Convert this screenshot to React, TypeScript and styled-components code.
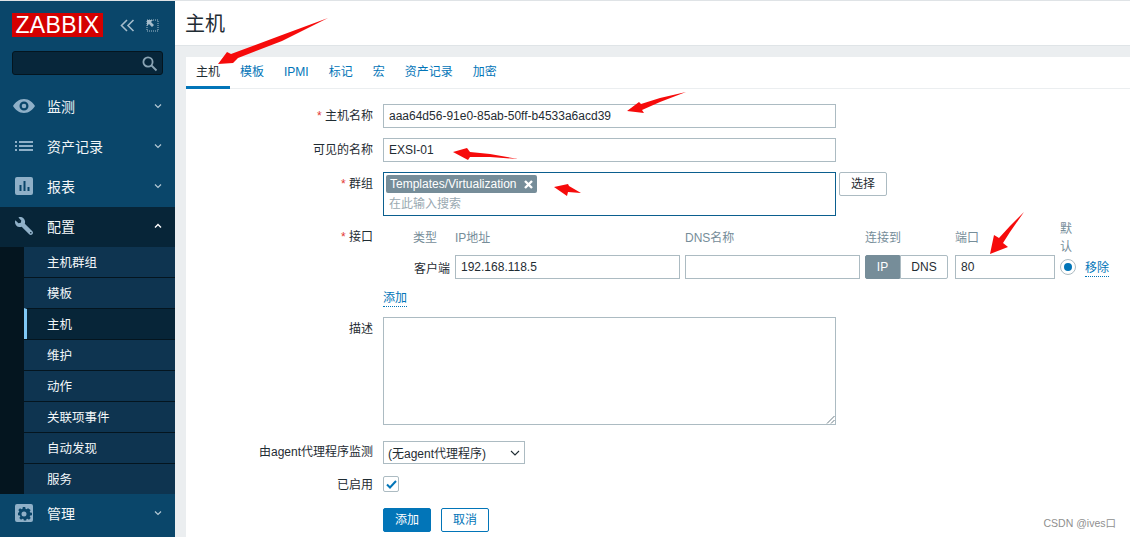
import React from "react";
import styled, { createGlobalStyle } from "styled-components";
import { FaWrench } from "react-icons/fa";

const FONT = `"Liberation Sans", "Noto Sans CJK SC", sans-serif`;

const Global = createGlobalStyle`
  html, body { margin: 0; padding: 0; height: 100%; overflow: hidden; background: #ebeef0; }
  * { box-sizing: border-box; }
  body { font-family: ${FONT}; font-size: 12px; color: #1f2c33; }
`;

const Page = styled.div`
  position: relative;
  display: flex;
  width: 1130px;
  height: 537px;
  overflow: hidden;
  border-top: 1px solid #dfe3e6;
`;

const Sidebar = styled.aside`
  flex: 0 0 175px;
  display: flex;
  flex-direction: column;
  background: #0a466a;
  color: #f2f6f8;
`;

const Brand = styled.div`
  display: flex;
  align-items: center;
  height: 24px;
  margin: 12px 0 0 12px;
`;

const Logo = styled.div`
  width: 91px;
  height: 24px;
  background: #d40000;
  color: #fff;
  font-size: 23px;
  line-height: 24px;
  text-align: center;
  letter-spacing: 0.4px;
`;

const BrandIcons = styled.div`
  display: flex;
  align-items: center;
  gap: 11px;
  margin-left: 17px;
  color: #a5bccb;
`;

const Search = styled.div`
  display: flex;
  align-items: center;
  justify-content: flex-end;
  width: 151px;
  height: 24px;
  margin: 14px 0 0 12px;
  padding-right: 4px;
  background: #07263a;
  border: 1px solid #04151f;
  border-radius: 3px;
  color: #8aa4b4;
`;

const Menu = styled.nav`
  display: flex;
  flex-direction: column;
  margin-top: 12px;
`;

const MenuItem = styled.div<{ $open?: boolean }>`
  display: flex;
  align-items: center;
  height: 40px;
  padding: 0 0 2px 15px;
  font-size: 14px;
  background: ${(p) => (p.$open ? "#072538" : "transparent")};
`;

const IconSlot = styled.span`
  flex: 0 0 32px;
  display: flex;
  align-items: center;
  color: #8fb0c8;
`;

const EyeIcon = styled.svg`
  margin-left: -2px;
`;

const MenuLabel = styled.span`
  flex: 1;
`;

const Chevron = styled.span`
  display: flex;
  margin-right: 13px;
  color: #b4c8d4;
`;

const SubMenu = styled.div`
  display: flex;
  flex-direction: column;
  height: 247px;
  padding-left: 24px;
  background: #04151f;
`;

const SubItem = styled.div<{ $active?: boolean }>`
  flex: 1;
  display: flex;
  align-items: center;
  padding: 0 0 2px ${(p) => (p.$active ? "20px" : "23px")};
  font-size: 12.5px;
  background: ${(p) => (p.$active ? "#072538" : "#0e3450")};
  border-left: ${(p) => (p.$active ? "3px solid #7fc8f5" : "none")};
  border-top: 1px solid #04151f;
  &:first-child { border-top: none; }
`;

const Main = styled.main`
  flex: 1;
  display: flex;
  flex-direction: column;
  min-width: 0;
`;

const Header = styled.header`
  height: 45px;
  padding-left: 10px;
  background: #fff;
  border-bottom: 1px solid #dfe4e7;
`;

const Title = styled.h1`
  margin: 0;
  font-size: 20px;
  font-weight: 400;
  line-height: 46px;
  color: #1f2c33;
`;

const Panel = styled.section`
  flex: 1;
  margin: 11px 0 0 11px;
  background: #fff;
`;

const Tabs = styled.div`
  display: flex;
  height: 32px;
  border-bottom: 1px solid #ebeef0;
`;

const Tab = styled.div<{ $active?: boolean }>`
  padding: 0 10px;
  height: 32px;
  line-height: 31px;
  font-size: 12px;
  color: ${(p) => (p.$active ? "#1f2c33" : "#0275b8")};
  border-bottom: ${(p) => (p.$active ? "3px solid #0275b8" : "none")};
`;

const Form = styled.div`
  display: grid;
  grid-template-columns: 187px 1fr;
  column-gap: 10px;
  align-items: start;
  padding-top: 15px;
`;

const Label = styled.div<{ $required?: boolean; $mt?: number }>`
  margin-top: ${(p) => p.$mt ?? 0}px;
  min-height: 24px;
  line-height: 24px;
  text-align: right;
  color: #1f2c33;
  white-space: nowrap;
  &::before {
    content: ${(p) => (p.$required ? '"* "' : '""')};
    color: #e33734;
  }
`;

const Field = styled.div<{ $mt?: number }>`
  margin-top: ${(p) => p.$mt ?? 0}px;
`;

const TextInput = styled.div<{ $w?: number }>`
  width: ${(p) => p.$w ?? 453}px;
  height: 24px;
  padding: 0 5px;
  line-height: 22px;
  font-size: 12px;
  background: #fff;
  border: 1px solid #acbbc2;
  color: #1f2c33;
  white-space: nowrap;
`;

const GroupRow = styled.div`
  display: flex;
  align-items: flex-start;
  gap: 3px;
`;

const GroupBox = styled.div`
  width: 453px;
  height: 44px;
  padding: 2px;
  border: 1px solid #0b5f8f;
`;

const Tag = styled.div`
  display: inline-flex;
  align-items: center;
  height: 18px;
  padding: 0 4px;
  gap: 7px;
  background: #768d99;
  color: #fff;
  border-radius: 2px;
  line-height: 18px;
`;

const Placeholder = styled.div`
  margin: 3px 0 0 3px;
  line-height: 17px;
  color: #9aa9b1;
`;

const GhostButton = styled.div`
  width: 48px;
  height: 24px;
  line-height: 22px;
  text-align: center;
  color: #1f2c33;
  background: #fff;
  border: 1px solid #acbbc2;
  border-radius: 2px;
`;

const IfaceGrid = styled.div`
  display: grid;
  grid-template-columns: 37px 225px 175px 85px 100px 20px auto;
  column-gap: 5px;
  margin-left: 30px;
  align-items: center;
`;

const Th = styled.div`
  margin: 1px 0 -1px;
  color: #768d99;
  line-height: 18px;
  white-space: nowrap;
`;

const ThWrap = styled(Th)`
  white-space: normal;
`;

const RowHead = styled.div`
  padding-left: 1px;
  white-space: nowrap;
`;

const Segments = styled.div`
  display: flex;
  width: 83px;
  height: 24px;
`;

const Segment = styled.div<{ $on?: boolean }>`
  flex: ${(p) => (p.$on ? "0 0 35px" : "1")};
  line-height: 22px;
  text-align: center;
  color: ${(p) => (p.$on ? "#fff" : "#1f2c33")};
  background: ${(p) => (p.$on ? "#768d99" : "#fff")};
  border: 1px solid ${(p) => (p.$on ? "#768d99" : "#acbbc2")};
  border-radius: ${(p) => (p.$on ? "2px 0 0 2px" : "0 2px 2px 0")};
`;

const Radio = styled.div`
  width: 16px;
  height: 16px;
  border: 1px solid #acbbc2;
  border-radius: 50%;
  background: #fff;
  display: flex;
  align-items: center;
  justify-content: center;
  &::after {
    content: "";
    width: 8px;
    height: 8px;
    border-radius: 50%;
    background: #0275b8;
  }
`;

const DottedLink = styled.span`
  display: inline-block;
  color: #0275b8;
  line-height: 15px;
  border-bottom: 1px dotted #0275b8;
`;

const RemoveCell = styled.span`
  padding-top: 4px;
`;

const Textarea = styled.div`
  width: 453px;
  height: 108px;
  border: 1px solid #acbbc2;
  position: relative;
  background: #fff;
`;

const Grip = styled.svg`
  position: absolute;
  right: 0;
  bottom: 0;
`;

const Select = styled.div`
  display: flex;
  align-items: center;
  justify-content: space-between;
  width: 142px;
  height: 23px;
  padding: 0 4px;
  border: 1px solid #acbbc2;
  background: #fff;
`;

const Checkbox = styled.div`
  width: 16px;
  height: 16px;
  border: 1px solid #acbbc2;
  border-radius: 2px;
  display: flex;
  align-items: center;
  justify-content: center;
`;

const Actions = styled.div`
  display: flex;
  gap: 10px;
`;

const ActionButton = styled.div<{ $primary?: boolean }>`
  width: 48px;
  height: 24px;
  line-height: 22px;
  text-align: center;
  border: 1px solid #0275b8;
  border-radius: 2px;
  color: ${(p) => (p.$primary ? "#fff" : "#0275b8")};
  background: ${(p) => (p.$primary ? "#0275b8" : "#fff")};
`;

const Arrows = styled.svg`
  position: absolute;
  left: 0;
  top: -1px;
  pointer-events: none;
`;

const Watermark = styled.div`
  position: absolute;
  right: 14px;
  bottom: 7px;
  font-size: 10.5px;
  color: #8f8f8f;
`;

const Down = () => (
  <svg width="8" height="6" viewBox="0 0 8 6" fill="none" stroke="currentColor" strokeWidth="1.2">
    <path d="M1 1.500 4 4.500 7 1.500" />
  </svg>
);
const Up = () => (
  <svg width="8" height="6" viewBox="0 0 8 6" fill="none" stroke="#fff" strokeWidth="1.4">
    <path d="M1 4.500 4 1.500 7 4.500" />
  </svg>
);

const App = () => (
  <>
    <Global />
    <Page>
      <Sidebar>
        <Brand>
          <Logo>ZABBIX</Logo>
          <BrandIcons>
            <svg width="15" height="13" viewBox="0 0 15 13" fill="none" stroke="currentColor" strokeWidth="1.6">
              <path d="M7 1 1.500 6.500 7 12M13.500 1 8 6.500 13.500 12" />
            </svg>
            <svg width="13" height="13" viewBox="0 0 13 13" fill="none">
              <path d="M1 1h11v11H1z" stroke="currentColor" strokeDasharray="1 1" />
              <path d="M1 1h6L5 3l3 3-2 2-3-3-2 2z" fill="currentColor" />
            </svg>
          </BrandIcons>
        </Brand>
        <Search>
          <svg width="17" height="17" viewBox="0 0 17 17" fill="none" stroke="currentColor" strokeWidth="1.8">
            <circle cx="7" cy="7" r="4.600" />
            <path d="M10.500 10.500 15.500 15.500" />
          </svg>
        </Search>
        <Menu>
          <MenuItem>
            <IconSlot>
              <EyeIcon width="22" height="14" viewBox="0 0 22 14">
                <path fillRule="evenodd" fill="currentColor" d="M11 0c5 0 9 3.500 11 7-2 3.500-6 7-11 7S2 10.500 0 7c2-3.500 6-7 11-7zm0 2.500a4.500 4.500 0 1 0 0 9 4.500 4.500 0 0 0 0-9zm0 2.200a2.300 2.300 0 1 1 0 4.600 2.300 2.300 0 0 1 0-4.600z" />
              </EyeIcon>
            </IconSlot>
            <MenuLabel>监测</MenuLabel>
            <Chevron><Down /></Chevron>
          </MenuItem>
          <MenuItem>
            <IconSlot>
              <svg width="18" height="12" viewBox="0 0 18 12" fill="currentColor">
                <path d="M0 1h2v2H0zM4 1h14v2H4zM0 5h2v2H0zM4 5h14v2H4zM0 9h2v2H0zM4 9h14v2H4z" />
              </svg>
            </IconSlot>
            <MenuLabel>资产记录</MenuLabel>
            <Chevron><Down /></Chevron>
          </MenuItem>
          <MenuItem>
            <IconSlot>
              <svg width="18" height="18" viewBox="0 0 18 18">
                <path fillRule="evenodd" fill="currentColor" d="M2 0h14a2 2 0 0 1 2 2v14a2 2 0 0 1-2 2H2a2 2 0 0 1-2-2V2a2 2 0 0 1 2-2zm2.500 8v6h2V8zm4-4v10h2V4zm4 6v4h2v-4z" />
              </svg>
            </IconSlot>
            <MenuLabel>报表</MenuLabel>
            <Chevron><Down /></Chevron>
          </MenuItem>
          <MenuItem $open>
            <IconSlot><FaWrench size={18} style={{ transform: "scaleX(-1)" }} /></IconSlot>
            <MenuLabel>配置</MenuLabel>
            <Chevron><Up /></Chevron>
          </MenuItem>
          <SubMenu>
            <SubItem>主机群组</SubItem>
            <SubItem>模板</SubItem>
            <SubItem $active>主机</SubItem>
            <SubItem>维护</SubItem>
            <SubItem>动作</SubItem>
            <SubItem>关联项事件</SubItem>
            <SubItem>自动发现</SubItem>
            <SubItem>服务</SubItem>
          </SubMenu>
          <MenuItem>
            <IconSlot>
              <svg width="18" height="18" viewBox="0 0 18 18">
                <path fillRule="evenodd" fill="currentColor" d="M2 0h14a2 2 0 0 1 2 2v14a2 2 0 0 1-2 2H2a2 2 0 0 1-2-2V2a2 2 0 0 1 2-2zm5.800 3-.3 1.700-1 .5-1.500-1-1.700 1.700 1 1.500-.5 1L3 8.800v2.400l1.800.3.5 1-1 1.500 1.700 1.700 1.500-1 1 .4.300 1.400h2.400l.3-1.400 1-.4 1.500 1 1.700-1.700-1-1.500.5-1 1.800-.3V8.800l-1.800-.3-.5-1 1-1.500L13 4.300l-1.500 1-1-.5L10.200 3zM9 7.500a2.500 2.500 0 1 1 0 5 2.500 2.500 0 0 1 0-5z" />
              </svg>
            </IconSlot>
            <MenuLabel>管理</MenuLabel>
            <Chevron><Down /></Chevron>
          </MenuItem>
        </Menu>
      </Sidebar>
      <Main>
        <Header>
          <Title>主机</Title>
        </Header>
        <Panel>
          <Tabs>
            <Tab $active>主机</Tab>
            <Tab>模板</Tab>
            <Tab>IPMI</Tab>
            <Tab>标记</Tab>
            <Tab>宏</Tab>
            <Tab>资产记录</Tab>
            <Tab>加密</Tab>
          </Tabs>
          <Form>
            <Label $required>主机名称</Label>
            <Field><TextInput>aaa64d56-91e0-85ab-50ff-b4533a6acd39</TextInput></Field>

            <Label $mt={10}>可见的名称</Label>
            <Field $mt={10}><TextInput>EXSI-01</TextInput></Field>

            <Label $required $mt={10}>群组</Label>
            <Field $mt={10}>
              <GroupRow>
                <GroupBox>
                  <Tag>
                    Templates/Virtualization
                    <svg width="9" height="9" viewBox="0 0 9 9" stroke="#fff" strokeWidth="2.400">
                      <path d="M1 1 8 8M8 1 1 8" />
                    </svg>
                  </Tag>
                  <Placeholder>在此输入搜索</Placeholder>
                </GroupBox>
                <GhostButton>选择</GhostButton>
              </GroupRow>
            </Field>

            <Label $required $mt={9}>接口</Label>
            <Field $mt={3}>
              <IfaceGrid>
                <Th>类型</Th>
                <Th>IP地址</Th>
                <Th>DNS名称</Th>
                <Th>连接到</Th>
                <Th>端口</Th>
                <ThWrap>默认</ThWrap>
                <span />
                <RowHead>客户端</RowHead>
                <TextInput $w={225}>192.168.118.5</TextInput>
                <TextInput $w={175} />
                <Segments>
                  <Segment $on>IP</Segment>
                  <Segment>DNS</Segment>
                </Segments>
                <TextInput $w={100}>80</TextInput>
                <Radio />
                <RemoveCell><DottedLink>移除</DottedLink></RemoveCell>
              </IfaceGrid>
            </Field>

            <span />
            <Field $mt={12}><DottedLink>添加</DottedLink></Field>

            <Label $mt={10}>描述</Label>
            <Field $mt={10}>
              <Textarea>
                <Grip width="9" height="9" viewBox="0 0 9 9" stroke="#6b7c85" fill="none">
                  <path d="M1 8.500 8.500 1M5 8.500 8.500 5" />
                </Grip>
              </Textarea>
            </Field>

            <Label $mt={15}>由agent代理程序监测</Label>
            <Field $mt={16}>
              <Select>
                (无agent代理程序)
                <svg width="10" height="6" viewBox="0 0 10 6" fill="none" stroke="#1f2c33" strokeWidth="1.100">
                  <path d="M1 1 5 5 9 1" />
                </svg>
              </Select>
            </Field>

            <Label $mt={9}>已启用</Label>
            <Field $mt={12}>
              <Checkbox>
                <svg width="11" height="9" viewBox="0 0 11 9" fill="none" stroke="#0275b8" strokeWidth="2">
                  <path d="M1 4.500 4 7.500 10 1" />
                </svg>
              </Checkbox>
            </Field>

            <span />
            <Field $mt={11}>
              <Actions>
                <ActionButton $primary>添加</ActionButton>
                <ActionButton>取消</ActionButton>
              </Actions>
            </Field>
          </Form>
        </Panel>
      </Main>
      <Arrows width="1130" height="537" viewBox="0 0 1130 537">
        <g fill="#f60b0b">
          <path d="M328 18 282 41 238 58 233 63 218 64 227 52 231 54 282 35Z" />
          <path d="M686 92 660 102 642 110 644 113 627 111 639 102 641 104 660 98Z" />
          <path d="M518 159 490 157 470 157 468 160 453 152 467 148 470 152 490 154Z" />
          <path d="M581 193 569 186 568 184 554 187 567 196 568 192Z" />
          <path d="M1024 212 1010 232 1003 243 1008 247 990 254 994 235 999 238 1010 226Z" />
        </g>
      </Arrows>
      <Watermark>CSDN @ives口</Watermark>
    </Page>
  </>
);

export default App;
